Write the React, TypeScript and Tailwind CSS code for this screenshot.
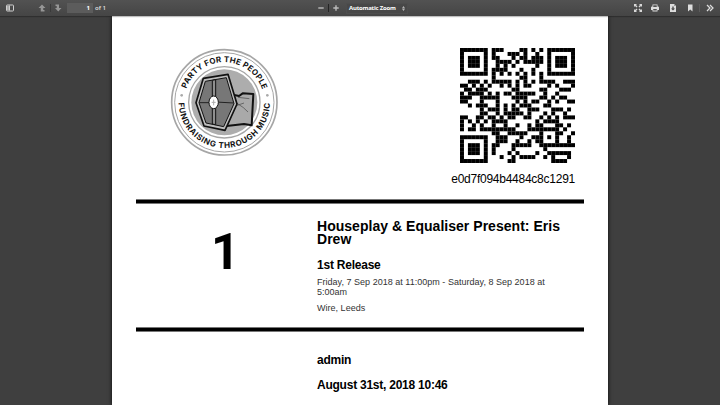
import React from "react";

const SIZE = 29;
const TICKET_CODE = "e0d7f094b4484c8c1291";

function gfMul(a: number, b: number): number {
  let r = 0;
  for (let i = 7; i >= 0; i--) {
    r = (r << 1) ^ ((r >>> 7) * 0x11d);
    if ((b >>> i) & 1) r ^= a;
  }
  return r;
}

function errorWords(data: number[], count: number): number[] {
  const gen: number[] = new Array(count).fill(0);
  gen[count - 1] = 1;
  let root = 1;
  for (let i = 0; i < count; i++) {
    for (let j = 0; j < count; j++) {
      gen[j] = gfMul(gen[j], root);
      if (j + 1 < count) gen[j] ^= gen[j + 1];
    }
    root = gfMul(root, 2);
  }
  const rem: number[] = new Array(count).fill(0);
  for (const b of data) {
    const f = b ^ (rem.shift() as number);
    rem.push(0);
    gen.forEach((g, i) => (rem[i] ^= gfMul(g, f)));
  }
  return rem;
}

// Version 3 QR symbol, error correction level H, mask 2
function qrMatrix(text: string): boolean[][] {
  const bits: number[] = [];
  const put = (v: number, n: number) => {
    for (let i = n - 1; i >= 0; i--) bits.push((v >>> i) & 1);
  };
  put(4, 4);
  put(text.length, 8);
  for (const c of text) put(c.charCodeAt(0), 8);
  put(0, 4);
  const words: number[] = [];
  for (let i = 0; i < bits.length; i += 8) words.push(parseInt(bits.slice(i, i + 8).join(""), 2));
  for (let p = 0xec; words.length < 26; p ^= 0xec ^ 0x11) words.push(p);
  const blocks = [words.slice(0, 13), words.slice(13)];
  const ecc = blocks.map((b) => errorWords(b, 22));
  const out: number[] = [];
  for (let i = 0; i < 13; i++) blocks.forEach((b) => out.push(b[i]));
  for (let i = 0; i < 22; i++) ecc.forEach((b) => out.push(b[i]));

  const m: boolean[][] = Array.from({ length: SIZE }, () => new Array(SIZE).fill(false));
  const used: boolean[][] = Array.from({ length: SIZE }, () => new Array(SIZE).fill(false));
  const set = (r: number, c: number, v: boolean) => {
    if (r < 0 || c < 0 || r >= SIZE || c >= SIZE) return;
    m[r][c] = v;
    used[r][c] = true;
  };
  for (let i = 0; i < SIZE; i++) {
    set(6, i, i % 2 === 0);
    set(i, 6, i % 2 === 0);
  }
  for (const [y, x] of [[3, 3], [3, SIZE - 4], [SIZE - 4, 3]]) {
    for (let dy = -4; dy <= 4; dy++)
      for (let dx = -4; dx <= 4; dx++) {
        const d = Math.max(Math.abs(dx), Math.abs(dy));
        set(y + dy, x + dx, d !== 2 && d !== 4);
      }
  }
  for (let dy = -2; dy <= 2; dy++)
    for (let dx = -2; dx <= 2; dx++) set(22 + dy, 22 + dx, Math.max(Math.abs(dx), Math.abs(dy)) !== 1);

  const f = "001110011100111".split("").map((c) => c === "1");
  for (let i = 0; i < 6; i++) {
    set(8, i, f[i]);
    set(i, 8, f[14 - i]);
  }
  set(8, 7, f[6]);
  set(8, 8, f[7]);
  set(7, 8, f[8]);
  for (let i = 0; i < 7; i++) set(SIZE - 1 - i, 8, f[i]);
  for (let i = 0; i < 8; i++) set(8, SIZE - 8 + i, f[7 + i]);
  set(SIZE - 8, 8, true);

  let k = 0;
  for (let right = SIZE - 1; right >= 1; right -= 2) {
    if (right === 6) right = 5;
    for (let v = 0; v < SIZE; v++) {
      for (let j = 0; j < 2; j++) {
        const x = right - j;
        const y = ((right + 1) & 2) === 0 ? SIZE - 1 - v : v;
        if (used[y][x]) continue;
        const bit = k < out.length * 8 ? (out[k >> 3] >>> (7 - (k & 7))) & 1 : 0;
        k++;
        m[y][x] = (bit === 1) !== (x % 3 === 0);
      }
    }
  }
  return m;
}

const modules = qrMatrix(TICKET_CODE);

function QrCode() {
  return (
    <svg className="block h-[115px] w-[115px]" viewBox="0 0 29 29">
      {modules.map((row, y) =>
        row.map((on, x) => (on ? <rect key={`${x}-${y}`} x={x} y={y} width="1" height="1" fill="#000" /> : null))
      )}
    </svg>
  );
}

function Logo() {
  return (
    <svg className="block h-[120px] w-[120px]" viewBox="0 0 360 360">
      <defs>
        <path id="top-arc" d="M66.8 140 A121 121 0 0 1 298 153" />
        <path id="bottom-arc" d="M44 182 A137 137 0 0 0 318 180" />
      </defs>
      <g fill="none" stroke="#a6a6a6">
        <circle cx="181" cy="181" r="158" strokeWidth="5" />
        <circle cx="181" cy="181" r="149" strokeWidth="3" />
        <circle cx="181" cy="181" r="107" strokeWidth="4" />
      </g>
      <circle cx="181" cy="181" r="99" fill="#adadad" />
      <circle cx="53" cy="160" r="4" fill="#aaa" />
      <circle cx="310" cy="160" r="4" fill="#aaa" />
      <g className="font-['Inter']" fontWeight="700" fontSize="24" fill="#111">
        <text textLength="298">
          <textPath href="#top-arc" textLength="298">PARTY FOR THE PEOPLE</textPath>
        </text>
        <text textLength="427">
          <textPath href="#bottom-arc" textLength="427">FUNDRAISING THROUGH MUSIC</textPath>
        </text>
      </g>
      <path d="M207 158 L225 162 L236 154 L268 156 L263 250 L240 246 L188 252 Z" fill="#a9a9a9" stroke="#111" strokeWidth="6" strokeLinejoin="round" />
      <path d="M222 166 L256 170 M219 184 Q240 196 252 210 M214 192 L240 183" fill="none" stroke="#444" strokeWidth="2" />
      <path d="M118 109 L192 97 L219 186 L183 265 L120 252 L96 182 Z" fill="#bdbdbd" stroke="#111" strokeWidth="5" strokeLinejoin="round" />
      <path d="M124 118 L187 107 L210 185 L179 254 L126 243 L105 182 Z" fill="#777" stroke="#111" strokeWidth="3" strokeLinejoin="round" />
      <path d="M145 115 L155 113 L155 248 L145 246 Z" fill="#8f8f8f" stroke="#111" strokeWidth="3" />
      <path d="M105 182 H145 M155 180 L210 183" stroke="#222" strokeWidth="3" />
      <ellipse cx="149" cy="181" rx="14" ry="19" fill="#fff" stroke="#111" strokeWidth="3" />
      <path d="M149 173 V190 M143 181 H155" stroke="#aaa" strokeWidth="3" />
    </svg>
  );
}

function Arrow({ down = false }: { down?: boolean }) {
  return (
    <svg className="block size-2" viewBox="0 0 16 16">
      <path
        d={down ? "M3 1H10V8H15L8.5 15L2 8H5.5V4H3Z" : "M8 1L15 8H10.5V12H13V15H5.5V8H1Z"}
        fill="#969696"
      />
    </svg>
  );
}

function Toolbar() {
  return (
    <header className="relative z-10 flex h-4 shrink-0 items-center bg-gradient-to-b from-[#525252] to-[#454545] font-['Open_Sans',sans-serif] text-[6px] leading-none text-[#e3e3e3] shadow-[0_1px_1px_rgba(0,0,0,0.25)]">
      <div className="flex w-[313px] items-center pl-[6px]">
        <svg className="block size-2" viewBox="0 0 16 16">
          <rect x="1" y="2" width="14" height="12" rx="1.5" fill="none" stroke="#d0d0d0" strokeWidth="2" />
          <path d="M2 3H6V13H2Z" fill="#aaa" />
          <path d="M7 3V13" stroke="#d0d0d0" strokeWidth="2" />
        </svg>
        <span className="ml-6"><Arrow /></span>
        <span className="ml-[4px] h-2 w-px bg-[#3a3a3a]" />
        <span className="ml-[3px]"><Arrow down /></span>
        <span className="ml-[5px] flex h-[10px] w-[26px] items-center justify-end bg-[#5c5c5c] pr-[3px] font-bold text-white">1</span>
        <span className="ml-[2px] font-semibold">of 1</span>
      </div>
      <div className="flex items-center">
        <svg className="ml-[5px] block h-2 w-[6px]" viewBox="0 0 6 8"><path d="M0.3 4H5.7" stroke="#bbb" strokeWidth="1.4" /></svg>
        <span className="ml-1 h-2 w-px bg-[#242424]" />
        <svg className="ml-[4px] block h-2 w-[6px]" viewBox="0 0 6 8"><path d="M0.3 4H5.7M3 1.3V6.7" stroke="#bbb" strokeWidth="1.4" /></svg>
        <div className="ml-[7px] flex h-[11px] w-[62px] items-center justify-between border border-[#4d4d4d] bg-[#484848] pr-[2px] pl-[2px]">
          <span className="whitespace-nowrap font-bold tracking-[-0.22px] text-white">Automatic Zoom</span>
          <svg className="block h-[5px] w-[3px]" viewBox="0 0 6 10"><path d="M3 0L6 4.4H0ZM3 10L6 5.6H0Z" fill="#b5b5b5" /></svg>
        </div>
      </div>
      <div className="ml-auto flex items-center pr-[6px]">
        <svg className="block size-2" viewBox="0 0 16 16" fill="#d8d8d8">
          <path d="M0 0H6L4 2L7 5L5 7L2 4L0 6ZM16 0V6L14 4L11 7L9 5L12 2L10 0ZM0 16V10L2 12L5 9L7 11L4 14L6 16ZM16 16H10L12 14L9 11L11 9L14 12L16 10Z" />
        </svg>
        <svg className="ml-[9px] block size-2" viewBox="0 0 16 16">
          <path d="M3 1H13V5H14Q16 5 16 7V12H13V15H3V12H0V7Q0 5 2 5H3Z" fill="#ddd" />
          <path d="M4.5 2.5H11.5V6H4.5ZM4.5 10H11.5V13H4.5Z" fill="#505050" />
        </svg>
        <svg className="ml-[10px] block size-2" viewBox="0 0 16 16">
          <path d="M2 0H10L14 4V16H2Z" fill="#ddd" />
          <path d="M6.7 5H9.3V9H12L8 13L4 9H6.7Z" fill="#444" />
          <path d="M10 0V4H14Z" fill="#999" />
        </svg>
        <svg className="ml-[9px] block size-2" viewBox="0 0 16 16"><path d="M4 1H13V15L8.5 11L4 15Z" fill="#ddd" /></svg>
        <span className="ml-[5px] h-2 w-px bg-[#5c5c5c]" />
        <svg className="ml-[6px] block size-2" viewBox="0 0 16 16"><path d="M2 2L8 8L2 14M8 2L14 8L8 14" fill="none" stroke="#ddd" strokeWidth="2.5" /></svg>
      </div>
    </header>
  );
}

function Rule() {
  return <hr className="h-[5px] border-0 border-y border-[#777] bg-black" />;
}

export default function App() {
  return (
    <div className="flex h-[405px] w-[720px] flex-col overflow-hidden bg-[#3f3f3f]">
      <Toolbar />
      <main className="mx-auto w-[496px] flex-1 bg-white px-6 font-['Liberation_Sans',Arial,sans-serif] text-black shadow-[0_0_4px_rgba(0,0,0,0.9)]">
        <section className="flex h-[183px] justify-between">
          <div className="pt-[26px] pl-[28px]"><Logo /></div>
          <div className="flex flex-col items-end pt-8 pr-[9px]">
            <QrCode />
            <p className="mt-[9px] text-[12px] leading-[14px] tracking-[-0.25px]">{TICKET_CODE}</p>
          </div>
        </section>
        <Rule />
        <section className="flex h-[123px]">
          <div className="w-[181px] pt-[18px] pl-[75px] font-['Roboto',sans-serif] text-[50px] leading-[60px] font-bold">1</div>
          <div className="flex-1 pt-[16px]">
            <h1 className="text-[14px] leading-[13px] font-bold tracking-[0.03px]">Houseplay &amp; Equaliser Present: Eris<br />Drew</h1>
            <h2 className="mt-[12px] text-[12px] leading-[14px] font-bold tracking-[-0.23px]">1st Release</h2>
            <p className="mt-[5px] text-[9px] leading-[10px] tracking-[0.02px] text-[#333]">Friday, 7 Sep 2018 at 11:00pm - Saturday, 8 Sep 2018 at<br />5:00am</p>
            <p className="mt-[6px] text-[9px] leading-[10px] tracking-[0.02px] text-[#333]">Wire, Leeds</p>
          </div>
        </section>
        <Rule />
        <section className="pt-[21px] pl-[181px] text-[12px] leading-[14px] font-bold tracking-[-0.24px]">
          <p>admin</p>
          <p className="mt-[11px]">August 31st, 2018 10:46</p>
        </section>
      </main>
    </div>
  );
}
